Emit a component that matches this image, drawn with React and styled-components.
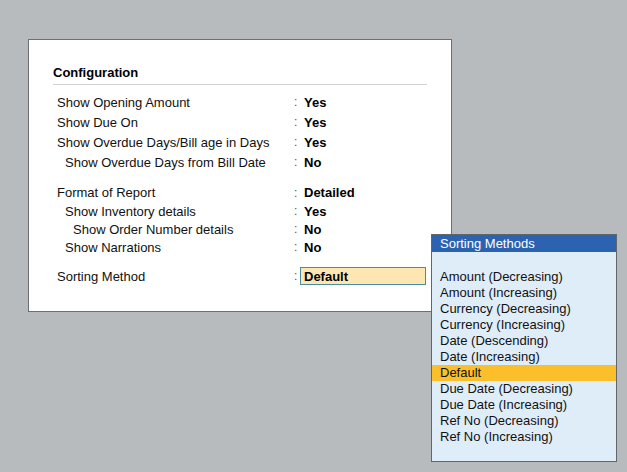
import React from "react";
import styled, { createGlobalStyle } from "styled-components";

const GlobalStyle = createGlobalStyle`
  html, body {
    margin: 0;
    padding: 0;
    background: #b7bbbe;
  }
  body {
    font-family: "Liberation Sans", Arial, sans-serif;
    font-size: 13px;
    color: #000;
  }
`;

const rows = [
  { label: "Show Opening Amount", value: "Yes", level: 0, h: 20 },
  { label: "Show Due On", value: "Yes", level: 0, h: 20 },
  { label: "Show Overdue Days/Bill age in Days", value: "Yes", level: 0, h: 20 },
  { label: "Show Overdue Days from Bill Date", value: "No", level: 1, h: 20 },
  { spacer: 11 },
  { label: "Format of Report", value: "Detailed", level: 0, h: 19 },
  { label: "Show Inventory details", value: "Yes", level: 1, h: 18 },
  { label: "Show Order Number details", value: "No", level: 2, h: 18 },
  { label: "Show Narrations", value: "No", level: 1, h: 18 },
  { spacer: 11 },
];

const methods = [
  "Amount (Decreasing)",
  "Amount (Increasing)",
  "Currency (Decreasing)",
  "Currency (Increasing)",
  "Date (Descending)",
  "Date (Increasing)",
  "Default",
  "Due Date (Decreasing)",
  "Due Date (Increasing)",
  "Ref No (Decreasing)",
  "Ref No (Increasing)",
];

const App = () => {
  return (
    <Screen>
      <GlobalStyle />
      <Panel>
        <Title>Configuration</Title>
        <List>
          {rows.map((r, i) =>
            r.spacer ? (
              <Spacer key={i} $h={r.spacer} />
            ) : (
              <Row key={i} $h={r.h}>
                <Label $level={r.level}>{r.label}</Label>
                <Colon>:</Colon>
                <Value>{r.value}</Value>
              </Row>
            )
          )}
          <Row $h={18}>
            <Label $level={0}>Sorting Method</Label>
            <Colon>:</Colon>
            <InputBox>Default</InputBox>
          </Row>
        </List>
      </Panel>

      <Popup>
        <PopupHeader>Sorting Methods</PopupHeader>
        <PopupList>
          {methods.map((m) => (
            <Option key={m} $active={m === "Default"}>
              {m}
            </Option>
          ))}
        </PopupList>
      </Popup>
    </Screen>
  );
};

const Screen = styled.div`
  position: relative;
  width: 627px;
  height: 472px;
  overflow: hidden;
  padding: 39px 0 0 28px;
  box-sizing: border-box;
`;

const Panel = styled.div`
  width: 424px;
  height: 273px;
  box-sizing: border-box;
  background: #fff;
  border: 1px solid #6d6f71;
  padding: 25px 24px 0 24px;
`;

const Title = styled.div`
  font-weight: bold;
  font-size: 13px;
  line-height: 16px;
  padding-bottom: 3px;
  border-bottom: 1px solid #cfd2d4;
`;

const List = styled.div`
  display: flex;
  flex-direction: column;
  padding-top: 7px;
`;

const Spacer = styled.div`
  height: ${({ $h }) => $h}px;
`;

const Row = styled.div`
  display: grid;
  grid-template-columns: 237px 7px 1fr;
  align-items: center;
  height: ${({ $h }) => $h}px;
  padding-left: 4px;
`;

const Label = styled.span`
  padding-left: ${({ $level }) => $level * 8}px;
  white-space: nowrap;
  color: #111;
`;

const Colon = styled.span`
  color: #555;
  font-size: 12px;
`;

const Value = styled.span`
  font-weight: bold;
  padding-left: 3px;
`;

const InputBox = styled.span`
  display: flex;
  align-items: center;
  margin-left: -1px;
  width: 126px;
  height: 18px;
  box-sizing: border-box;
  padding-left: 3px;
  font-weight: bold;
  background: #fee6b2;
  border: 1px solid #4b8d9e;
`;

const Popup = styled.div`
  position: absolute;
  left: 431px;
  top: 234px;
  width: 186px;
  height: 228px;
  box-sizing: border-box;
  background: #dfedf9;
  border: 1px solid #5f676d;
  display: flex;
  flex-direction: column;
`;

const PopupHeader = styled.div`
  height: 17px;
  line-height: 17px;
  background: #2b63b1;
  color: #fff;
  padding-left: 8px;
  font-size: 13px;
`;

const PopupList = styled.div`
  display: flex;
  flex-direction: column;
  padding-top: 17px;
`;

const Option = styled.div`
  height: 16px;
  line-height: 16px;
  padding-left: 8px;
  color: #111;
  background: ${({ $active }) => ($active ? "#fbbf2c" : "transparent")};
`;

export default App;
